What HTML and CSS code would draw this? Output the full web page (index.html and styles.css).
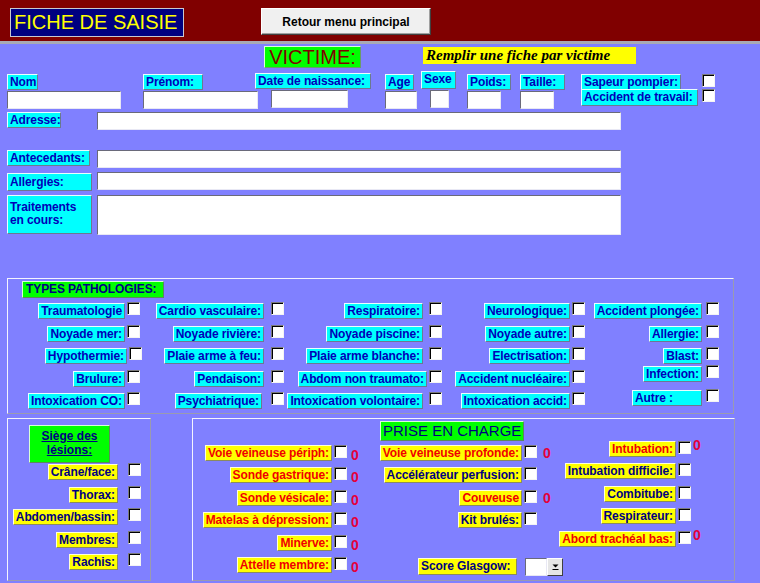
FILE: index.html
```html
<!DOCTYPE html>
<html lang="fr">
<head>
<meta charset="utf-8">
<title>Fiche de saisie</title>
<link rel="stylesheet" href="styles.css">
</head>
<body>
<header class="topbar">
  <div class="brand">FICHE DE SAISIE</div>
  <div class="back-btn">Retour menu principal</div>
</header>

<main class="form">
  <div class="title-row">
    <div class="victime-title">VICTIME:</div>
    <div class="hint">Remplir une fiche par victime</div>
  </div>

  <div class="fields-row">
    <div class="field f-nom"><span class="lbl cyan w-nom">Nom</span><span class="txt i-nom"></span></div>
    <div class="field f-prenom"><span class="lbl cyan w-prenom">Prénom:</span><span class="txt i-prenom"></span></div>
    <div class="field f-date"><span class="lbl cyan w-date">Date de naissance:</span><span class="txt i-date"></span></div>
    <div class="field f-age"><span class="lbl cyan w-age">Age</span><span class="txt i-age"></span></div>
    <div class="field f-sexe"><span class="lbl cyan w-sexe">Sexe</span><span class="txt i-sexe"></span></div>
    <div class="field f-poids"><span class="lbl cyan w-poids">Poids:</span><span class="txt i-poids"></span></div>
    <div class="field f-taille"><span class="lbl cyan w-taille">Taille:</span><span class="txt i-taille"></span></div>
    <div class="field f-flags">
      <div class="flag-row"><span class="lbl cyan w-sapeur">Sapeur pompier:</span><span class="cb"></span></div>
      <div class="flag-row flag-2"><span class="lbl cyan w-accident">Accident de travail:</span><span class="cb"></span></div>
    </div>
  </div>

  <div class="line l-adresse"><span class="lbl cyan w-adresse">Adresse:</span><span class="txt wide"></span></div>
  <div class="line l-antecedants"><span class="lbl cyan w-antec">Antecedants:</span><span class="txt wide"></span></div>
  <div class="line l-allergies"><span class="lbl cyan w-allerg lower">Allergies:</span><span class="txt wide"></span></div>
  <div class="line l-traitements"><span class="lbl cyan w-allerg tall">Traitements<br>en cours:</span><span class="txt wide tall-box"></span></div>

  <section class="panel types">
    <div class="section-title types-title">TYPES PATHOLOGIES:</div>
    <div class="patho-grid">
      <div class="pc"><span class="lbl cyan">Traumatologie</span><span class="cb"></span></div>
      <div class="pc"><span class="lbl cyan">Cardio vasculaire:</span><span class="cb"></span></div>
      <div class="pc"><span class="lbl cyan">Respiratoire:</span><span class="cb"></span></div>
      <div class="pc"><span class="lbl cyan">Neurologique:</span><span class="cb"></span></div>
      <div class="pc"><span class="lbl cyan">Accident plongée:</span><span class="cb"></span></div>

      <div class="pc"><span class="lbl cyan">Noyade mer:</span><span class="cb"></span></div>
      <div class="pc"><span class="lbl cyan">Noyade rivière:</span><span class="cb"></span></div>
      <div class="pc"><span class="lbl cyan">Noyade piscine:</span><span class="cb"></span></div>
      <div class="pc"><span class="lbl cyan">Noyade autre:</span><span class="cb"></span></div>
      <div class="pc"><span class="lbl cyan">Allergie:</span><span class="cb"></span></div>

      <div class="pc pc-shift"><span class="lbl cyan">Hypothermie:</span><span class="cb"></span></div>
      <div class="pc"><span class="lbl cyan">Plaie arme à feu:</span><span class="cb"></span></div>
      <div class="pc"><span class="lbl cyan">Plaie arme blanche:</span><span class="cb"></span></div>
      <div class="pc"><span class="lbl cyan">Electrisation:</span><span class="cb"></span></div>
      <div class="pc"><span class="lbl cyan">Blast:</span><span class="cb"></span></div>

      <div class="pc"><span class="lbl cyan">Brulure:</span><span class="cb"></span></div>
      <div class="pc"><span class="lbl cyan">Pendaison:</span><span class="cb"></span></div>
      <div class="pc pc-tight"><span class="lbl cyan">Abdom non traumato:</span><span class="cb"></span></div>
      <div class="pc"><span class="lbl cyan">Accident nucléaire:</span><span class="cb"></span></div>
      <div class="pc pc-up5"><span class="lbl cyan">Infection:</span><span class="cb"></span></div>

      <div class="pc"><span class="lbl cyan">Intoxication CO:</span><span class="cb"></span></div>
      <div class="pc pc-psy"><span class="lbl cyan">Psychiatrique:</span><span class="cb"></span></div>
      <div class="pc"><span class="lbl cyan">Intoxication volontaire:</span><span class="cb"></span></div>
      <div class="pc"><span class="lbl cyan">Intoxication accid:</span><span class="cb"></span></div>
      <div class="pc pc-up3"><span class="lbl cyan w-autre">Autre :</span><span class="cb"></span></div>
    </div>
  </section>

  <div class="bottom">
    <section class="panel siege">
      <div class="section-title siege-title">Siège des<br>lésions:</div>
      <div class="siege-list">
        <div class="srow"><span class="lbl yellow">Crâne/face:</span><span class="cb"></span></div>
        <div class="srow"><span class="lbl yellow">Thorax:</span><span class="cb"></span></div>
        <div class="srow"><span class="lbl yellow">Abdomen/bassin:</span><span class="cb"></span></div>
        <div class="srow"><span class="lbl yellow">Membres:</span><span class="cb"></span></div>
        <div class="srow"><span class="lbl yellow">Rachis:</span><span class="cb"></span></div>
      </div>
    </section>

    <section class="panel prise">
      <div class="pcol pcol-left">
        <div class="prow"><span class="lbl yellow red">Voie veineuse périph:</span><span class="cb"></span><span class="zero">0</span></div>
        <div class="prow"><span class="lbl yellow red">Sonde gastrique:</span><span class="cb"></span><span class="zero">0</span></div>
        <div class="prow"><span class="lbl yellow red">Sonde vésicale:</span><span class="cb"></span><span class="zero">0</span></div>
        <div class="prow"><span class="lbl yellow red">Matelas à dépression:</span><span class="cb"></span><span class="zero">0</span></div>
        <div class="prow"><span class="lbl yellow red">Minerve:</span><span class="cb"></span><span class="zero">0</span></div>
        <div class="prow"><span class="lbl yellow red">Attelle membre:</span><span class="cb"></span><span class="zero">0</span></div>
      </div>
      <div class="pcol pcol-mid">
        <div class="section-title prise-title">PRISE EN CHARGE</div>
        <div class="prow"><span class="lbl yellow red">Voie veineuse profonde:</span><span class="cb"></span><span class="zero">0</span></div>
        <div class="prow"><span class="lbl yellow">Accélérateur perfusion:</span><span class="cb"></span><span class="zero"></span></div>
        <div class="prow"><span class="lbl yellow red">Couveuse</span><span class="cb"></span><span class="zero">0</span></div>
        <div class="prow"><span class="lbl yellow">Kit brulés:</span><span class="cb"></span><span class="zero"></span></div>
        <div class="glasgow">
          <span class="lbl yellow w-glasgow">Score Glasgow:</span>
          <span class="combo"><span class="combo-field"></span><span class="combo-btn"><svg width="9" height="9" viewBox="0 0 9 9"><path d="M1.5 2.5h6L4.5 5.5z" fill="#000"/><path d="M1.5 7.5h6" stroke="#000" stroke-width="1"/></svg></span></span>
        </div>
      </div>
      <div class="pcol pcol-right">
        <div class="prow"><span class="lbl yellow red">Intubation:</span><span class="cb"></span><span class="zero">0</span></div>
        <div class="prow"><span class="lbl yellow">Intubation difficile:</span><span class="cb"></span><span class="zero"></span></div>
        <div class="prow"><span class="lbl yellow">Combitube:</span><span class="cb"></span><span class="zero"></span></div>
        <div class="prow"><span class="lbl yellow">Respirateur:</span><span class="cb"></span><span class="zero"></span></div>
        <div class="prow"><span class="lbl yellow red">Abord trachéal bas:</span><span class="cb"></span><span class="zero">0</span></div>
      </div>
    </section>
  </div>
</main>
</body>
</html>
```

FILE: styles.css
```css
* { box-sizing: border-box; }
html, body { margin: 0; padding: 0; }
body {
  width: 760px;
  height: 583px;
  overflow: hidden;
  background: #8080ff;
  font-family: "Liberation Sans", Arial, sans-serif;
}

/* ---------- header ---------- */
.topbar {
  height: 44px;
  background: #800000;
  border-bottom: 3px solid #a9a9b4;
  display: flex;
  align-items: flex-start;
  padding: 8px 0 0 10px;
}
.brand {
  width: 174px;
  height: 29px;
  background: #000080;
  border: 1px solid #c8c8d0;
  color: #ffff00;
  font-size: 20px;
  line-height: 27px;
  padding-left: 3px;
  white-space: nowrap;
}
.back-btn {
  margin-left: 77px;
  width: 170px;
  height: 27px;
  background: #f0f0f0;
  border: 1px solid;
  border-color: #ffffff #404040 #404040 #ffffff;
  box-shadow: inset -1px -1px 0 #a0a0a0;
  color: #000;
  font-weight: bold;
  font-size: 12px;
  display: flex;
  align-items: center;
  justify-content: center;
}

/* ---------- generic controls ---------- */
.form { padding-left: 7px; }

.lbl {
  display: inline-block;
  height: 16px;
  line-height: 14px;
  padding: 0 2px;
  border: 1px solid;
  border-color: #e8ffff #6c7890 #6c7890 #e8ffff;
  font-weight: bold;
  font-size: 12px;
  letter-spacing: -0.1px;
  white-space: nowrap;
  flex: none;
}
.cyan { background: #00ffff; color: #0000b8; }
.yellow { background: #ffff00; color: #000080; border-color: #ffffd8 #8a8a60 #8a8a60 #ffffd8; }
.yellow.red { color: #f00000; }

.cb {
  display: inline-block;
  flex: none;
  width: 13px;
  height: 13px;
  background: #fff;
  border: 1px solid;
  border-color: #7a7a7a #f4f4f4 #f4f4f4 #7a7a7a;
  box-shadow: inset 1px 1px 0 #000;
}

.txt {
  display: block;
  height: 18px;
  background: #fff;
  border: 1px solid;
  border-color: #6a6a7a #e8e8f4 #e8e8f4 #6a6a7a;
}

.panel {
  border: 1px solid;
  border-color: #f4f4ff #9a9ab0 #9a9ab0 #f4f4ff;
}

.section-title {
  background: #00ff00;
  color: #000080;
  border: 1px solid;
  border-color: #d8ffd8 #5a8a5a #5a8a5a #d8ffd8;
}

/* ---------- title row ---------- */
.title-row {
  display: flex;
  align-items: flex-start;
  margin-top: 2px;
}
.victime-title {
  margin-left: 257px;
  width: 97px;
  height: 22px;
  background: #00ff00;
  border: 1px solid;
  border-color: #d8ffd8 #6a9a6a #6a9a6a #d8ffd8;
  color: #800000;
  font-size: 20px;
  line-height: 20px;
  text-align: center;
}
.hint {
  margin-left: 62px;
  margin-top: 1px;
  width: 213px;
  height: 17px;
  background: #ffff00;
  font-family: "Liberation Serif", "Times New Roman", serif;
  font-style: italic;
  font-weight: bold;
  font-size: 15px;
  line-height: 17px;
  padding-left: 3px;
  white-space: nowrap;
}

/* ---------- identity fields ---------- */
.fields-row {
  display: flex;
  align-items: flex-start;
  margin-top: 3px;
}
.field {
  display: flex;
  flex-direction: column;
  align-items: flex-start;
  margin-top: 3px;
}
.field .txt { margin-top: 1px; }

.f-nom { width: 114px; }
.f-prenom { margin-left: 22px; width: 115px; }
.f-date { margin-left: -3px; width: 116px; margin-top: 2px; }
.f-age { margin-left: 14px; width: 32px; }
.f-sexe { margin-left: 4px; width: 35px; margin-top: 0; }
.f-poids { margin-left: 11px; width: 44px; }
.f-taille { margin-left: 9px; width: 45px; }
.f-flags { margin-left: 16px; width: 134px; }

.w-nom { width: 31px; }
.w-prenom { width: 60px; }
.w-date { width: 116px; }
.w-age { width: 29px; }
.w-sexe { width: 35px; height: 18px; }
.w-poids { width: 44px; }
.w-taille { width: 45px; }
.w-sapeur { width: 100px; }
.w-accident { width: 117px; height: 17px; }

.i-nom { width: 114px; }
.i-prenom { width: 115px; }
.f-date .txt { margin-left: 16px; width: 77px; }
.i-age { width: 32px; }
.f-sexe .txt { margin-left: 9px; width: 19px; }
.i-poids { width: 34px; }
.i-taille { width: 34px; }

.flag-row {
  width: 134px;
  display: flex;
  justify-content: space-between;
  align-items: flex-start;
}
.flag-2 { margin-top: -1px; }

/* ---------- address lines ---------- */
.line {
  display: grid;
  grid-template-columns: 90px 524px;
  align-items: start;
}
.line .lbl { justify-self: start; }
.l-adresse { margin-top: 3px; }
.l-antecedants { margin-top: 20px; }
.l-allergies { margin-top: 4px; }
.l-traitements { margin-top: 4px; }

.w-adresse { width: 54px; }
.w-antec { width: 83px; }
.w-allerg { width: 85px; }
.lower { margin-top: 1px; height: 18px; line-height: 16px; }
.tall { height: 39px; line-height: 13px; padding-top: 5px; white-space: normal; }
.wide { width: 524px; }
.tall-box { height: 40px; }

/* ---------- types pathologies ---------- */
.types {
  margin-top: 43px;
  width: 727px;
  height: 136px;
}
.types-title {
  margin: 2px 0 0 14px;
  width: 142px;
  height: 17px;
  font-weight: bold;
  font-size: 12px;
  letter-spacing: -0.1px;
  line-height: 15px;
  padding-left: 3px;
  white-space: nowrap;
}
.patho-grid {
  margin-top: 4px;
  display: grid;
  grid-template-columns: 132px 144px 158px 143px 134px;
  grid-auto-rows: 22.6px;
}
.pc {
  display: flex;
  justify-content: flex-end;
  align-items: flex-start;
}
.pc .lbl { margin-top: 1px; }
.pc:nth-child(5n+1) { gap: 2px; }
.pc:nth-child(5n+2) { gap: 7px; }
.pc:nth-child(5n+3) { gap: 6px; }
.pc:nth-child(5n+4) { gap: 2px; }
.pc:nth-child(5n+5) { gap: 4px; }
.pc-shift { margin-right: -2px; }
.pc-tight.pc { gap: 2px; }
.pc-psy.pc { gap: 9px; }
.pc-up5 { margin-top: -5px; }
.pc-up3 { margin-top: -3px; }
.w-autre { width: 70px; }

/* ---------- bottom panels ---------- */
.bottom {
  display: flex;
  align-items: flex-start;
  margin-top: 4px;
}
.siege {
  width: 144px;
  height: 163px;
}
.siege-title {
  margin: 6px 0 0 21px;
  width: 81px;
  height: 38px;
  font-weight: bold;
  font-size: 12px;
  line-height: 14px;
  padding-top: 3px;
  text-align: center;
  text-decoration: underline;
}
.siege-list {
  display: flex;
  flex-direction: column;
  align-items: flex-end;
  padding-right: 9px;
}
.srow {
  height: 22.5px;
  display: flex;
  align-items: flex-start;
  gap: 10px;
}
.srow .lbl { margin-top: 1px; }

.prise {
  margin-left: 41px;
  width: 543px;
  height: 163px;
  display: flex;
  align-items: flex-start;
}
.pcol {
  display: flex;
  flex-direction: column;
  align-items: flex-end;
}
.prow {
  height: 22.4px;
  display: flex;
  align-items: flex-start;
}
.prow .cb { margin-left: 2px; }
.zero {
  display: inline-block;
  width: 8px;
  height: 14px;
  color: #e4003c;
  font-weight: bold;
  font-size: 14px;
  line-height: 14px;
}
.pcol-left { width: 168px; padding: 26px 2px 0 0; }
.pcol-left .zero { margin-left: 4px; margin-top: 3px; }
.pcol-mid { width: 192px; padding-right: 2px; }
.pcol-mid .zero { margin-left: 6px; margin-top: 1px; }
.pcol-right { width: 181px; padding: 22px 33px 0 0; }
.pcol-right .zero { margin-left: 2px; margin-top: -3px; }

.prise-title {
  align-self: flex-start;
  margin: 2px 0 4px 19px;
  width: 144px;
  height: 20px;
  font-size: 15px;
  line-height: 18px;
  padding-left: 2px;
  white-space: nowrap;
}
.glasgow {
  align-self: flex-start;
  margin: 23px 0 0 57px;
  display: flex;
  align-items: flex-start;
}
.w-glasgow { width: 99px; height: 17px; line-height: 15px; }
.combo {
  margin-left: 8px;
  display: flex;
  height: 18px;
}
.combo-field {
  width: 22px;
  height: 18px;
  background: #fff;
  border: 1px solid;
  border-color: #6a6a7a #e8e8f4 #e8e8f4 #6a6a7a;
}
.combo-btn {
  width: 16px;
  height: 18px;
  background: #e6e6e6;
  border: 1px solid;
  border-color: #ffffff #404040 #404040 #ffffff;
  display: flex;
  align-items: center;
  justify-content: center;
}
.combo-btn svg { display: block; }
```
